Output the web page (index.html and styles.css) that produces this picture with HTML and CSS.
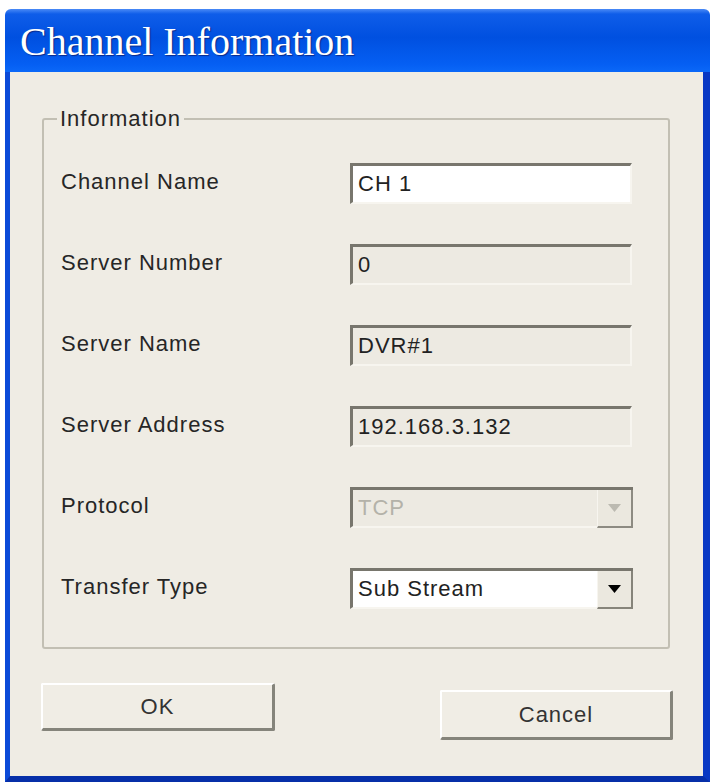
FILE: index.html
```html
<!DOCTYPE html>
<html>
<head>
    <meta charset="utf-8">
    <title>Channel Information</title>
    <link rel="stylesheet" href="styles.css">
</head>
<body>

<div class="window">
    <div class="titlebar">Channel Information</div>

    <div class="frame">
        <fieldset class="group">
            <legend>Information</legend>

            <div class="row">
                <span class="label">Channel Name</span>
                <div class="field">CH 1</div>
            </div>
            <div class="row">
                <span class="label">Server Number</span>
                <div class="field disabled">0</div>
            </div>
            <div class="row">
                <span class="label">Server Name</span>
                <div class="field disabled">DVR#1</div>
            </div>
            <div class="row">
                <span class="label">Server Address</span>
                <div class="field disabled">192.168.3.132</div>
            </div>
            <div class="row">
                <span class="label">Protocol</span>
                <div class="field combo disabled">
                    <span class="combo_text">TCP</span>
                    <span class="arrow">
                        <svg width="13" height="8" viewBox="0 0 13 8"><polygon points="0,0 13,0 6.5,8"/></svg>
                    </span>
                </div>
            </div>
            <div class="row">
                <span class="label">Transfer Type</span>
                <div class="field combo">
                    <span class="combo_text">Sub Stream</span>
                    <span class="arrow">
                        <svg width="13" height="8" viewBox="0 0 13 8"><polygon points="0,0 13,0 6.5,8"/></svg>
                    </span>
                </div>
            </div>
        </fieldset>

        <div class="buttons">
            <button type="button" class="btn">OK</button>
            <button type="button" class="btn btn_cancel">Cancel</button>
        </div>
    </div>
</div>

</body>
</html>
```

FILE: styles.css
```css
body {
    margin: 0;
    background: #ffffff;
    font-family: "Liberation Sans", Arial, sans-serif;
}

.window {
    width: 705px;
    margin: 9px 0 0 5px;
}

.titlebar {
    height: 63px;
    box-sizing: border-box;
    padding-left: 15px;
    border-radius: 6px 6px 0 0;
    background: linear-gradient(to bottom, #4a8af6 0, #0f5de9 5px, #0050e0 45%, #055ff3 88%, #0b68f8 100%);
    color: #ffffff;
    font-family: "Liberation Serif", "Times New Roman", serif;
    font-size: 40px;
    line-height: 66px;
    text-shadow: 1px 1px 1px #0a2a8a;
}

.frame {
    height: 704px;
    background: #efece4;
    border-left: 5px solid #0b4ad8;
    border-right: 7px solid #0838c4;
    border-bottom: 6px solid #062fa8;
    overflow: hidden;
}

.group {
    width: 628px;
    box-sizing: border-box;
    margin: 35px 0 0 32px;
    padding: 32px 0 38px 17px;
    border: 2px solid #c2bfb3;
    border-radius: 3px;
    min-width: 0;
}

.group legend {
    margin-left: -4px;
    padding: 0 3px;
    font-size: 22px;
    line-height: 24px;
    letter-spacing: 1px;
    color: #262626;
}

.row {
    display: grid;
    grid-template-columns: 289px 282px;
    align-items: center;
    height: 41px;
    margin-bottom: 40px;
}

.row:last-child {
    margin-bottom: 0;
}

.label {
    font-size: 22px;
    letter-spacing: 1px;
    color: #262626;
    padding-bottom: 3px;
}

.field {
    height: 41px;
    box-sizing: border-box;
    padding-left: 5px;
    background: #ffffff;
    border-top: 3px solid #78766d;
    border-left: 3px solid #78766d;
    border-right: 2px solid #f7f5ef;
    border-bottom: 2px solid #f7f5ef;
    font-size: 22px;
    line-height: 36px;
    letter-spacing: 1px;
    color: #222222;
}

.field.disabled {
    background: #edeae2;
}

.combo {
    display: flex;
    align-items: stretch;
    width: 283px;
    padding-right: 0;
    border-right: none;
}

.combo_text {
    flex: 1;
}

.arrow {
    width: 33px;
    display: flex;
    align-items: center;
    justify-content: center;
    background: #ebe8df;
    border-right: 2px solid #86847a;
    border-bottom: 2px solid #86847a;
    border-left: 1px solid #f7f5ef;
    margin-bottom: -2px;
}

.arrow polygon {
    fill: #000000;
}

.combo.disabled .combo_text {
    color: #b4b2a9;
}

.combo.disabled .arrow {
    border-right-color: #8d8b82;
    border-bottom-color: #8d8b82;
}

.combo.disabled .arrow polygon {
    fill: #bcbab1;
}

.buttons {
    display: flex;
    justify-content: space-between;
    align-items: flex-start;
    padding: 0 30px 0 31px;
    margin-top: 34px;
}

.btn {
    width: 234px;
    height: 48px;
    background: #f0ede5;
    border-top: 2px solid #ffffff;
    border-left: 2px solid #ffffff;
    border-right: 3px solid #85847b;
    border-bottom: 3px solid #85847b;
    border-radius: 2px;
    font-family: "Liberation Sans", Arial, sans-serif;
    font-size: 22px;
    letter-spacing: 1px;
    color: #333333;
    padding: 0;
}

.btn_cancel {
    width: 233px;
    height: 50px;
    margin-top: 7px;
}
```
